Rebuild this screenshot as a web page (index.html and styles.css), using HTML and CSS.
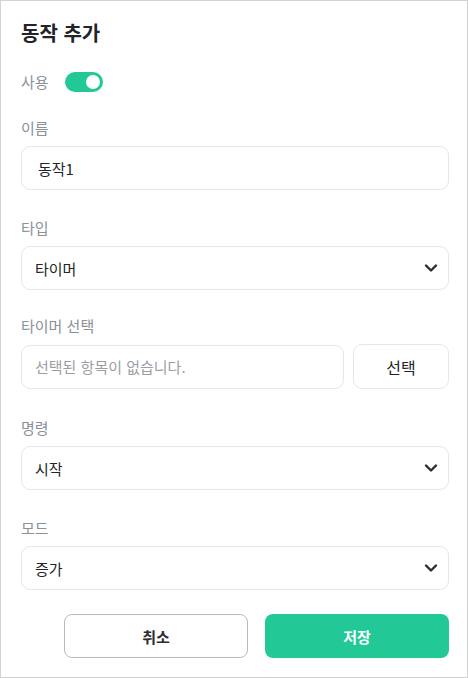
FILE: index.html
```html
<!DOCTYPE html>
<html lang="ko">
<head>
<meta charset="utf-8">
<link rel="stylesheet" href="styles.css">
</head>
<body>
<div class="dialog">
  <h1 class="title">동작 추가</h1>
  <div class="toggle-row">
    <span class="label">사용</span>
    <span class="toggle"><span class="knob"></span></span>
  </div>
  <div class="field">
    <div class="label">이름</div>
    <div class="input name">동작1</div>
  </div>
  <div class="field">
    <div class="label">타입</div>
    <div class="input select"><span>타이머</span>
      <svg class="chev" width="14" height="10" viewBox="0 0 14 10"><path d="M2 2.5 L7 7.5 L12 2.5" fill="none" stroke="#2b2d31" stroke-width="2.4" stroke-linecap="round" stroke-linejoin="round"/></svg>
    </div>
  </div>
  <div class="field pick-field">
    <div class="label">타이머 선택</div>
    <div class="pick-row">
      <div class="input placeholder">선택된 항목이 없습니다.</div>
      <div class="pick-btn">선택</div>
    </div>
  </div>
  <div class="field after-pick">
    <div class="label">명령</div>
    <div class="input select"><span>시작</span>
      <svg class="chev" width="14" height="10" viewBox="0 0 14 10"><path d="M2 2.5 L7 7.5 L12 2.5" fill="none" stroke="#2b2d31" stroke-width="2.4" stroke-linecap="round" stroke-linejoin="round"/></svg>
    </div>
  </div>
  <div class="field">
    <div class="label">모드</div>
    <div class="input select"><span>증가</span>
      <svg class="chev" width="14" height="10" viewBox="0 0 14 10"><path d="M2 2.5 L7 7.5 L12 2.5" fill="none" stroke="#2b2d31" stroke-width="2.4" stroke-linecap="round" stroke-linejoin="round"/></svg>
    </div>
  </div>
  <div class="actions">
    <div class="btn cancel">취소</div>
    <div class="btn save">저장</div>
  </div>
</div>
</body>
</html>
```
FILE: styles.css
```css
* { box-sizing: border-box; }
html, body { margin: 0; padding: 0; background: #fff; }
body {
  font-family: "Noto Sans CJK KR", "Noto Sans", sans-serif;
  color: #222428;
}
.dialog {
  width: 468px;
  height: 678px;
  border: 1px solid #d2d2d2;
  padding: 19px 18px 0 20px;
  display: flex;
  flex-direction: column;
}
.title {
  margin: 0;
  font-size: 20px;
  line-height: 26px;
  font-weight: 700;
  color: #222428;
}
.toggle-row {
  margin-top: 26px;
  display: flex;
  align-items: center;
  gap: 16px;
  height: 20px;
}
.label {
  font-size: 15px;
  line-height: 20px;
  color: #8c9097;
}
.toggle {
  width: 38px;
  height: 20px;
  border-radius: 10px;
  background: #22c997;
  position: relative;
}
.knob {
  position: absolute;
  right: 3px;
  top: 3px;
  width: 14px;
  height: 14px;
  border-radius: 50%;
  background: #fff;
}
.field { margin-top: 26px; }
.field + .field { margin-top: 28px; }
.field + .pick-field { margin-top: 26px; }
.field + .after-pick { margin-top: 29px; }
.field .label { margin-bottom: 8px; }
.input {
  height: 44px;
  border: 1px solid #e6e7ea;
  border-radius: 9px;
  display: flex;
  align-items: center;
  padding: 0 13px;
  font-size: 15px;
  color: #222428;
}
.input.name { padding-left: 16px; }
.select { justify-content: space-between; padding-right: 10px; }
.chev { display: block; }
.pick-row {
  display: flex;
  gap: 9px;
  align-items: center;
}
.placeholder { flex: 1; color: #9a9ea5; }
.pick-btn {
  width: 96px;
  height: 45px;
  border: 1px solid #e6e7ea;
  border-radius: 9px;
  display: flex;
  align-items: center;
  justify-content: center;
  font-size: 16px;
  color: #222428;
}
.actions {
  margin-top: 24px;
  display: flex;
  justify-content: flex-end;
  gap: 17px;
}
.btn {
  width: 184px;
  height: 44px;
  border-radius: 8px;
  display: flex;
  align-items: center;
  justify-content: center;
  font-size: 15px;
  font-weight: 700;
}
.cancel {
  border: 1px solid #b5b9c0;
  color: #2b2d31;
  font-weight: 600;
}
.save {
  background: #22c997;
  color: #fff;
}
```
